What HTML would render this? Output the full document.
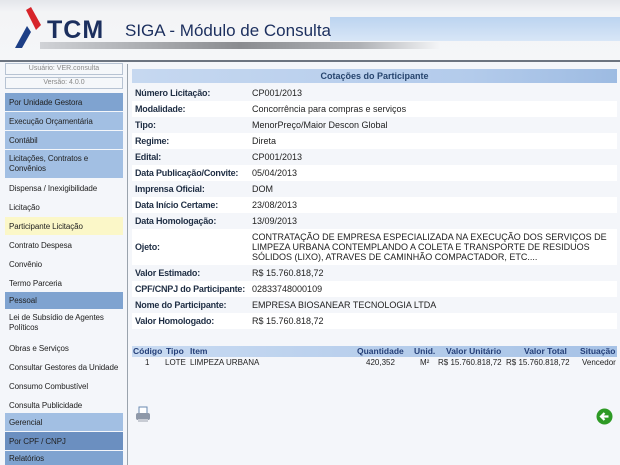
<!DOCTYPE html>
<html><head><meta charset="utf-8"><style>
*{margin:0;padding:0;box-sizing:border-box}
body{width:620px;height:465px;overflow:hidden;background:#f4f6fa;font-family:"Liberation Sans",sans-serif;position:relative}
.hdr{position:absolute;left:0;top:0;width:620px;height:62px;background:linear-gradient(#e4e6ea,#f3f4f6 20%,#f5f6f8);border-bottom:2px solid #6c7480}
.band{position:absolute;left:330px;top:17px;width:290px;height:24px;background:linear-gradient(#bcd4f0,#d8e6f7)}
.swoosh{position:absolute;left:40px;top:42px;width:400px;height:7px;background:linear-gradient(90deg,#d0d2d6,#8a8c90 50%,#b0b2b6 80%,rgba(200,200,200,0))}
.tcm{position:absolute;left:47px;top:16px;font-size:25px;font-weight:bold;color:#1c2f5e;letter-spacing:1px}
.siga{position:absolute;left:125px;top:21px;font-size:17px;color:#1c2f5e}
.side{position:absolute;left:5px;width:118px;font-size:8px;color:#222;padding-left:4px;display:flex;align-items:center;white-space:nowrap;letter-spacing:-0.1px}
.b1{background:#7fa3d0}.b2{background:#a2bfe3}.b3{background:#6b8fc0}
.box{position:absolute;left:5px;width:118px;height:12px;border:1px solid #b7c3d3;background:#f5f7fa;font-size:7px;color:#888;text-align:center;line-height:10px}
.vline{position:absolute;left:127px;top:64px;width:1px;height:401px;background:#9aa3ad}
.main{position:absolute;left:132px;top:69px;width:485px}
.title{height:14px;background:linear-gradient(90deg,#c6d8f0,#b3cbeb 70%,#9dbbe2);text-align:center;font-size:9px;font-weight:bold;color:#27456e;line-height:14px}
.row{display:flex;height:16px;align-items:center;font-size:9px;color:#222}
.row:nth-child(even){background:#fff}
.row .l{width:120px;padding-left:3px;font-weight:bold;color:#1f2e44;white-space:nowrap;letter-spacing:-0.2px}
.row .v{flex:1;line-height:10px}
.ih{position:absolute;left:132px;top:346px;width:485px;height:11px;background:linear-gradient(90deg,#c9dbf2,#a6c2e6);font-size:8.5px;font-weight:bold;color:#243f78}
.ih span,.ir span{position:absolute;top:0}
.ir{position:absolute;left:132px;top:358px;width:485px;height:11px;font-size:8px;color:#222}
</style></head><body>
<div class="hdr">
<div class="band"></div>
<div class="swoosh"></div>
<svg style="position:absolute;left:12px;top:7px" width="32" height="44"><polygon points="14,3 19,0 29,18 24,23" fill="#d7242a"/><polygon points="3,41 15,19 19,25 10,41" fill="#1d3f86"/></svg>
<div class="tcm">TCM</div>
<div class="siga">SIGA - Módulo de Consulta</div>
</div>
<div class="box" style="top:63px">Usuário: VER.consulta</div>
<div class="box" style="top:77px">Versão: 4.0.0</div>
<div class="side b1" style="top:93px;height:18px">Por Unidade Gestora</div>
<div class="side b2" style="top:112px;height:18px">Execução Orçamentária</div>
<div class="side b2" style="top:131px;height:18px">Contábil</div>
<div class="side b2" style="top:150px;height:28px;line-height:10px;white-space:normal">Licitações, Contratos e Convênios</div>
<div class="side" style="top:179px;height:18px">Dispensa / Inexigibilidade</div>
<div class="side" style="top:198px;height:18px">Licitação</div>
<div class="side" style="top:217px;height:18px;background:#fbf7c8">Participante Licitação</div>
<div class="side" style="top:236px;height:18px">Contrato Despesa</div>
<div class="side" style="top:255px;height:18px">Convênio</div>
<div class="side" style="top:274px;height:18px">Termo Parceria</div>
<div class="side b1" style="top:292px;height:17px">Pessoal</div>
<div class="side" style="top:311px;height:24px;line-height:10px;white-space:normal">Lei de Subsídio de Agentes Políticos</div>
<div class="side" style="top:339px;height:18px">Obras e Serviços</div>
<div class="side" style="top:358px;height:18px">Consultar Gestores da Unidade</div>
<div class="side" style="top:377px;height:18px">Consumo Combustível</div>
<div class="side" style="top:396px;height:18px">Consulta Publicidade</div>
<div class="side b2" style="top:413px;height:18px">Gerencial</div>
<div class="side b3" style="top:432px;height:18px">Por CPF / CNPJ</div>
<div class="side b1" style="top:451px;height:14px">Relatórios</div>
<div class="vline"></div>
<div class="main">
<div class="title">Cotações do Participante</div>
<div style="height:2px"></div>
<div>
<div class="row"><div class="l">Número Licitação:</div><div class="v">CP001/2013</div></div>
<div class="row"><div class="l">Modalidade:</div><div class="v">Concorrência para compras e serviços</div></div>
<div class="row"><div class="l">Tipo:</div><div class="v">MenorPreço/Maior Descon Global</div></div>
<div class="row"><div class="l">Regime:</div><div class="v">Direta</div></div>
<div class="row"><div class="l">Edital:</div><div class="v">CP001/2013</div></div>
<div class="row"><div class="l">Data Publicação/Convite:</div><div class="v">05/04/2013</div></div>
<div class="row"><div class="l">Imprensa Oficial:</div><div class="v">DOM</div></div>
<div class="row"><div class="l">Data Início Certame:</div><div class="v">23/08/2013</div></div>
<div class="row"><div class="l">Data Homologação:</div><div class="v">13/09/2013</div></div>
<div class="row" style="height:36px"><div class="l">Ojeto:</div><div class="v">CONTRATAÇÃO DE EMPRESA ESPECIALIZADA NA EXECUÇÃO DOS SERVIÇOS DE LIMPEZA URBANA CONTEMPLANDO A COLETA E TRANSPORTE DE RESIDUOS SÓLIDOS (LIXO), ATRAVES DE CAMINHÃO COMPACTADOR, ETC....</div></div>
<div class="row"><div class="l">Valor Estimado:</div><div class="v">R$ 15.760.818,72</div></div>
<div class="row"><div class="l">CPF/CNPJ do Participante:</div><div class="v">02833748000109</div></div>
<div class="row"><div class="l">Nome do Participante:</div><div class="v">EMPRESA BIOSANEAR TECNOLOGIA LTDA</div></div>
<div class="row"><div class="l">Valor Homologado:</div><div class="v">R$ 15.760.818,72</div></div>
</div></div>
<div class="ih"><span style="left:1px">Código</span><span style="left:34px">Tipo</span><span style="left:58px">Item</span><span style="left:225px">Quantidade</span><span style="left:282px">Unid.</span><span style="left:314px">Valor Unitário</span><span style="left:392px">Valor Total</span><span style="left:448px">Situação</span></div>
<div class="ir"><span style="left:13px">1</span><span style="left:33px">LOTE</span><span style="left:58px">LIMPEZA URBANA</span><span style="left:234px">420,352</span><span style="left:288px">M²</span><span style="left:306px">R$ 15.760.818,72</span><span style="left:374px">R$ 15.760.818,72</span><span style="left:450px">Vencedor</span></div>
<svg style="position:absolute;left:135px;top:406px" width="16" height="18"><rect x="4" y="1" width="8" height="7" fill="#fff" stroke="#6a8ab0"/><rect x="1" y="7" width="14" height="7" rx="2" fill="#8e98a8"/><rect x="3" y="13" width="10" height="3" fill="#c8ccd4"/></svg>
<svg style="position:absolute;left:596px;top:408px" width="17" height="17"><circle cx="8.5" cy="8.5" r="8" fill="#2e9a25"/><path d="M12.5 8.5H5.5M8.5 5L5 8.5 8.5 12" stroke="#fff" stroke-width="2.2" fill="none"/></svg>
</body></html>
